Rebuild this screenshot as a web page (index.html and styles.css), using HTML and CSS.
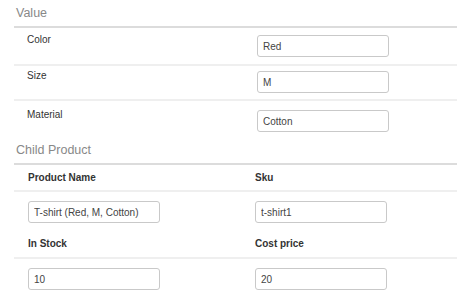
FILE: index.html
```html
<!DOCTYPE html>
<html lang="en">
  <head>
    <meta charset="UTF-8" />
    <title>Child product</title>
    <link rel="stylesheet" href="styles.css">
  </head>
  <body>
    <div class="panel">
      <h3 class="panel-title">Value</h3>

      <div class="attr-row first">
        <span class="attr-name">Color</span>
        <input type="text" class="field" value="Red" />
      </div>
      <div class="attr-row middle">
        <span class="attr-name">Size</span>
        <input type="text" class="field" value="M" />
      </div>
      <div class="attr-row last">
        <span class="attr-name">Material</span>
        <input type="text" class="field" value="Cotton" />
      </div>

      <h3 class="panel-title">Child Product</h3>

      <div class="head-row">
        <span>Product Name</span>
        <span>Sku</span>
      </div>
      <div class="input-row">
        <div><input type="text" class="field" value="T-shirt (Red, M, Cotton)" /></div>
        <div><input type="text" class="field" value="t-shirt1" /></div>
      </div>
      <div class="head-row">
        <span>In Stock</span>
        <span>Cost price</span>
      </div>
      <div class="input-row">
        <div><input type="text" class="field" value="10" /></div>
        <div><input type="text" class="field" value="20" /></div>
      </div>
    </div>
  </body>
</html>
```

FILE: styles.css
```css
body {
  margin: 0;
  background: #fff;
  font-family: "Liberation Sans", Arial, sans-serif;
  color: #333;
}

.panel {
  margin-left: 14px;
  width: 443px;
}

.panel-title {
  margin: 0;
  padding-left: 2px;
  height: 26px;
  line-height: 26px;
  font-size: 12.5px;
  font-weight: normal;
  color: #888;
  border-bottom: 2px solid #dcdcdc;
}

/* attribute rows */
.attr-row {
  display: grid;
  grid-template-columns: 243px 1fr;
  align-items: start;
  box-sizing: border-box;
  border-bottom: 2px solid #efefef;
}

.attr-row.first {
  height: 38px;
  padding-top: 5px;
}

.attr-row.middle {
  height: 35px;
  padding-top: 3px;
}

.attr-row.last {
  height: 36px;
  padding-top: 7px;
  border-bottom: none;
}

.attr-name {
  padding-left: 13px;
  font-size: 10px;
  line-height: 14px;
}

.attr-row .field {
  margin-top: 2px;
}

/* child product grid */
.head-row,
.input-row {
  display: grid;
  grid-template-columns: 227px 1fr;
  padding-left: 14px;
}

.head-row {
  padding-top: 6px;
  padding-bottom: 5px;
  border-bottom: 2px solid #efefef;
  font-size: 10px;
  font-weight: bold;
  line-height: 14px;
}

.input-row {
  height: 39px;
  box-sizing: border-box;
  padding-top: 9px;
}

.input-row + .head-row {
  padding-bottom: 6px;
}

.field {
  display: block;
  box-sizing: border-box;
  width: 132px;
  height: 22px;
  margin: 0;
  padding: 0 5px;
  border: 1px solid #c9c9c9;
  border-radius: 3px;
  background: #fff;
  font-family: "Liberation Sans", Arial, sans-serif;
  font-size: 10px;
  color: #444;
  outline: none;
}
```
